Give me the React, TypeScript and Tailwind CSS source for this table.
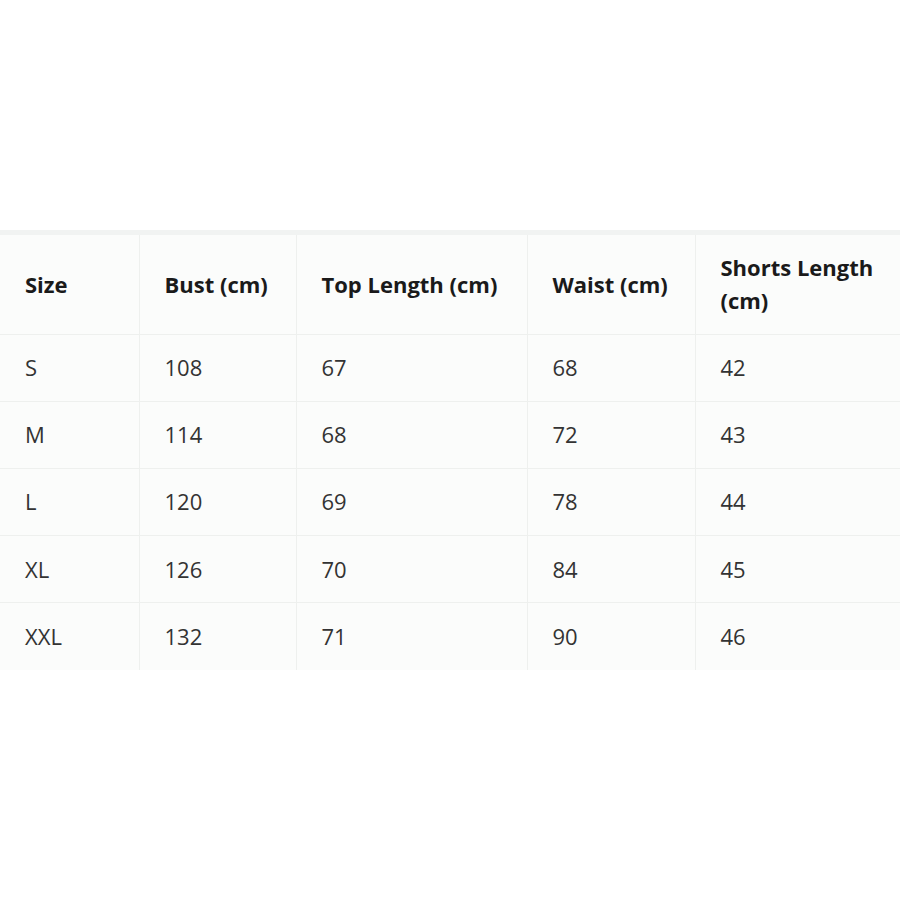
import React from "react";

const headers = ["Size", "Bust (cm)", "Top Length (cm)", "Waist (cm)", "Shorts Length (cm)"];

const rows = [
  ["S", "108", "67", "68", "42"],
  ["M", "114", "68", "72", "43"],
  ["L", "120", "69", "78", "44"],
  ["XL", "126", "70", "84", "45"],
  ["XXL", "132", "71", "90", "46"],
];

const colWidths = ["w-[139px]", "w-[157px]", "w-[231px]", "w-[168px]", "w-[205px]"];

export default function App() {
  return (
    <div
      className="w-[900px] h-[900px] bg-white overflow-hidden pt-[230px]"
      style={{ fontFamily: '"Open Sans", "Noto Sans", sans-serif' }}
    >
      <div className="border-t-[5px] border-[#f1f3f2] bg-[#fbfcfb]">
        <table className="border-collapse table-fixed w-[900px]">
          <thead>
            <tr className="h-[99px]">
              {headers.map((h, i) => (
                <th
                  key={h}
                  className={`${colWidths[i]} text-left align-middle pl-[25px] pr-2 text-[22px] leading-[33px] font-bold text-[#1a1a1a] border-r border-b border-[#eef0ee]`}
                >
                  {h}
                </th>
              ))}
            </tr>
          </thead>
          <tbody>
            {rows.map((r, ri) => (
              <tr key={ri} className="h-[67.2px]">
                {r.map((c, ci) => (
                  <td
                    key={ci}
                    className={`pl-[25px] text-[22px] text-[#333333] align-middle border-r border-[#eef0ee] ${
                      ri < rows.length - 1 ? "border-b" : ""
                    }`}
                  >
                    {c}
                  </td>
                ))}
              </tr>
            ))}
          </tbody>
        </table>
      </div>
    </div>
  );
}
